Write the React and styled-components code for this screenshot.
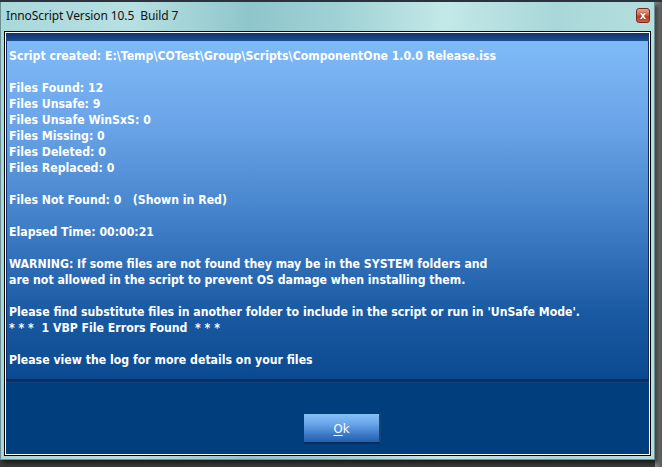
import React from "react";
import styled, { createGlobalStyle } from "styled-components";

const GlobalStyle = createGlobalStyle`
  html, body {
    margin: 0;
    padding: 0;
    background: #3c3c3c;
  }
`;

const Desktop = styled.div`
  width: 662px;
  height: 467px;
  overflow: hidden;
  background: linear-gradient(to right, #3a3a3a 0%, #3a3a3a 98.9%, #8a8a8a 99%, #5a5a5a 100%);
  display: flex;
  flex-direction: column;
  align-items: flex-start;
`;

const TopStrip = styled.div`
  width: 100%;
  height: 2px;
  background: #2d3440;
`;

const Window = styled.div`
  width: 655px;
  height: 458px;
  box-sizing: border-box;
  background: linear-gradient(
    to right,
    #a9d8db 0%,
    #b7e0e2 20%,
    #8fc6cb 38%,
    #a0d2d5 52%,
    #c3e8e8 68%,
    #a9d7d9 85%,
    #b4dede 100%
  );
  border: 1px solid #6b8f93;
  border-top: none;
  padding: 0 3px 3px 3px;
  display: flex;
  flex-direction: column;
  box-shadow: 3px 3px 4px rgba(0, 0, 0, 0.55);
`;

const TitleBar = styled.div`
  height: 29px;
  display: flex;
  align-items: center;
  justify-content: space-between;
  padding: 0 1px 0 2px;
`;

const Title = styled.span`
  font-family: "Noto Sans", "Liberation Sans", sans-serif;
  font-size: 12px;
  color: #111;
  letter-spacing: -0.1px;
  padding-bottom: 2px;
`;

const CloseButton = styled.div`
  width: 14px;
  height: 15px;
  margin-bottom: 2px;
  box-sizing: border-box;
  border: 1px solid #7a2a1a;
  border-radius: 3px;
  background: linear-gradient(to bottom, #e8a08c 0%, #d06a52 45%, #b83c22 55%, #c8604a 100%);
  display: flex;
  align-items: center;
  justify-content: center;
  color: #fff;
  font-family: "DejaVu Sans", sans-serif;
  font-weight: bold;
  font-size: 10px;
  line-height: 1;
  text-shadow: 0 0 1px #5a1a10, 0 0 1px #5a1a10;
`;

const Client = styled.div`
  flex: 1;
  display: flex;
  flex-direction: column;
  border: 1px solid #000;
  box-shadow: inset 0 0 0 1px #fff;
  padding: 1px;
  background: #003e7e;
`;

const TopBand = styled.div`
  height: 8px;
  background: linear-gradient(to bottom, #0d3470, #1c4c8c);
`;

const Message = styled.div`
  height: 338px;
  box-sizing: border-box;
  padding: 7px 0 0 2px;
  background: linear-gradient(to bottom, #7fbaf8 0%, #6aa4e8 25%, #3f7ec6 55%, #1a5aa2 80%, #0b4a90 100%);
  border-left: 1px solid #0b2f66;
  border-right: 1px solid #0b2f66;
`;

const Line = styled.div`
  font-family: "DejaVu Sans Condensed", "Liberation Sans", sans-serif;
  font-weight: bold;
  font-size: 12.2px;
  line-height: 16px;
  height: 16px;
  color: #fff;
  white-space: pre;
`;

const Separator = styled.div`
  height: 4px;
  background: linear-gradient(to bottom, #082c5c, #0a3266 60%, #154a88);
`;

const ButtonBar = styled.div`
  flex: 1;
  display: flex;
  align-items: flex-start;
  justify-content: center;
  padding-top: 31px;
  padding-left: 30px;
  background: #003e7e;
`;

const OkButton = styled.button`
  width: 77px;
  height: 30px;
  border: none;
  border-right: 2px solid #16437a;
  border-bottom: 2px solid #0b2a55;
  background: linear-gradient(to bottom, #86c0f8 0%, #6aa6ea 35%, #3a78c6 75%, #2160ae 100%);
  color: #fff;
  font-family: "DejaVu Sans Condensed", "Liberation Sans", sans-serif;
  font-size: 13px;
  padding: 0;
  cursor: pointer;
  u {
    text-decoration-thickness: 1px;
    text-underline-offset: 2px;
  }
`;

const lines = [
  "Script created: E:\\Temp\\COTest\\Group\\Scripts\\ComponentOne 1.0.0 Release.iss",
  "",
  "Files Found: 12",
  "Files Unsafe: 9",
  "Files Unsafe WinSxS: 0",
  "Files Missing: 0",
  "Files Deleted: 0",
  "Files Replaced: 0",
  "",
  "Files Not Found: 0   (Shown in Red)",
  "",
  "Elapsed Time: 00:00:21",
  "",
  "WARNING: If some files are not found they may be in the SYSTEM folders and",
  "are not allowed in the script to prevent OS damage when installing them.",
  "",
  "Please find substitute files in another folder to include in the script or run in 'UnSafe Mode'.",
  "* * *  1 VBP File Errors Found  * * *",
  "",
  "Please view the log for more details on your files",
];

export default function App() {
  return (
    <>
      <GlobalStyle />
      <Desktop>
        <TopStrip />
        <Window>
          <TitleBar>
            <Title>InnoScript Version 10.5&nbsp; Build 7</Title>
            <CloseButton>x</CloseButton>
          </TitleBar>
          <Client>
            <TopBand />
            <Message>
              {lines.map((l, i) => (
                <Line key={i}>{l}</Line>
              ))}
            </Message>
            <Separator />
            <ButtonBar>
              <OkButton>
                <u>O</u>k
              </OkButton>
            </ButtonBar>
          </Client>
        </Window>
      </Desktop>
    </>
  );
}
